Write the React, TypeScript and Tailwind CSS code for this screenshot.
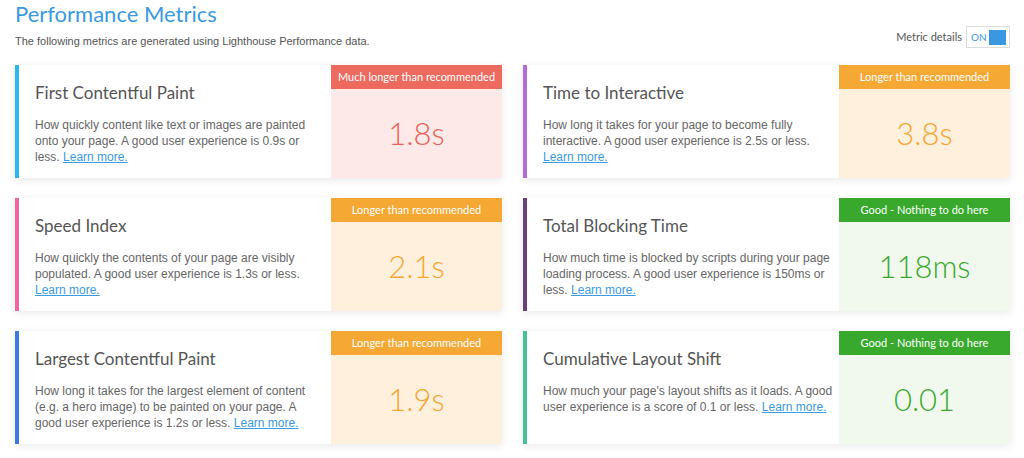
const metrics = [
  {
    title: 'First Contentful Paint',
    desc: 'How quickly content like text or images are painted onto your page. A good user experience is 0.9s or less.',
    value: '1.8s',
    status: 'bad',
    accent: 'border-[#2bb6f1]',
  },
  {
    title: 'Time to Interactive',
    desc: 'How long it takes for your page to become fully interactive. A good user experience is 2.5s or less.',
    value: '3.8s',
    status: 'warn',
    accent: 'border-[#b26dd2]',
  },
  {
    title: 'Speed Index',
    desc: 'How quickly the contents of your page are visibly populated. A good user experience is 1.3s or less.',
    value: '2.1s',
    status: 'warn',
    accent: 'border-[#f0659f]',
  },
  {
    title: 'Total Blocking Time',
    desc: 'How much time is blocked by scripts during your page loading process. A good user experience is 150ms or less.',
    value: '118ms',
    status: 'good',
    accent: 'border-[#6b3f7c]',
  },
  {
    title: 'Largest Contentful Paint',
    desc: 'How long it takes for the largest element of content (e.g. a hero image) to be painted on your page. A good user experience is 1.2s or less.',
    value: '1.9s',
    status: 'warn',
    accent: 'border-[#3a7be2]',
  },
  {
    title: 'Cumulative Layout Shift',
    desc: "How much your page's layout shifts as it loads. A good user experience is a score of 0.1 or less.",
    value: '0.01',
    status: 'good',
    accent: 'border-[#45c195]',
  },
];

const statusStyles: Record<string, { label: string; head: string; body: string; text: string }> = {
  bad: {
    label: 'Much longer than recommended',
    head: 'bg-[#ec6a5e]',
    body: 'bg-[#fde9e7]',
    text: 'text-[#ea6257]',
  },
  warn: {
    label: 'Longer than recommended',
    head: 'bg-[#f5a833]',
    body: 'bg-[#fef0dd]',
    text: 'text-[#f5a632]',
  },
  good: {
    label: 'Good - Nothing to do here',
    head: 'bg-[#38a92c]',
    body: 'bg-[#f1f9ef]',
    text: 'text-[#38a92c]',
  },
};

function MetricCard({ m }: { m: (typeof metrics)[number] }) {
  const s = statusStyles[m.status];
  return (
    <div
      className={`flex h-[113px] bg-white border-l-4 ${m.accent} shadow-[0_2px_8px_rgba(0,0,0,0.09)]`}
    >
      <div className="flex-1 pl-[16px] pr-[6px] pt-[17px]">
        <h3 className="font-['Lato',sans-serif] text-[17px] leading-[22px] text-[#555]">
          {m.title}
        </h3>
        <p className="mt-[13px] font-['Liberation_Sans',Arial,sans-serif] text-[12px] leading-[16px] text-[#666]">
          {m.desc}{' '}
          <a href="#" className="text-[#3a9ae2] underline">
            Learn more.
          </a>
        </p>
      </div>
      <div className="w-[171px] flex flex-col">
        <div
          className={`h-[24px] flex items-center justify-center ${s.head} font-['Lato',sans-serif] text-[11px] text-white`}
        >
          {s.label}
        </div>
        <div
          className={`flex-1 flex items-center justify-center ${s.body} ${s.text} font-['Lato',sans-serif] font-light text-[31px]`}
        >
          {m.value}
        </div>
      </div>
    </div>
  );
}

export default function App() {
  return (
    <div className="w-[1024px] h-[458px] bg-white pl-[15px] pr-[14px] overflow-hidden">
      <div className="flex items-start justify-between">
        <div>
          <h1 className="pt-[1px] font-['Lato',sans-serif] text-[22px] leading-[26px] text-[#3a9ae2]">
            Performance Metrics
          </h1>
          <p className="mt-[7px] font-['Liberation_Sans',Arial,sans-serif] text-[11px] leading-[14px] text-[#555]">
            The following metrics are generated using Lighthouse Performance data.
          </p>
        </div>
        <div className="mt-[26px] flex items-center gap-[4px]">
          <span className="font-['Lato',sans-serif] text-[11px] text-[#555]">Metric details</span>
          <div className="flex items-center h-[22px] w-[44px] border border-[#ddd] bg-white px-[3px]">
            <span className="font-['Lato',sans-serif] text-[10px] text-[#3a9ae2] pl-[1px]">ON</span>
            <span className="ml-auto w-[17px] h-[15px] bg-[#3a98e0]" />
          </div>
        </div>
      </div>
      <div className="mt-[17px] grid grid-cols-2 gap-x-[21px] gap-y-[20px]">
        {metrics.map((m) => (
          <MetricCard key={m.title} m={m} />
        ))}
      </div>
    </div>
  );
}
